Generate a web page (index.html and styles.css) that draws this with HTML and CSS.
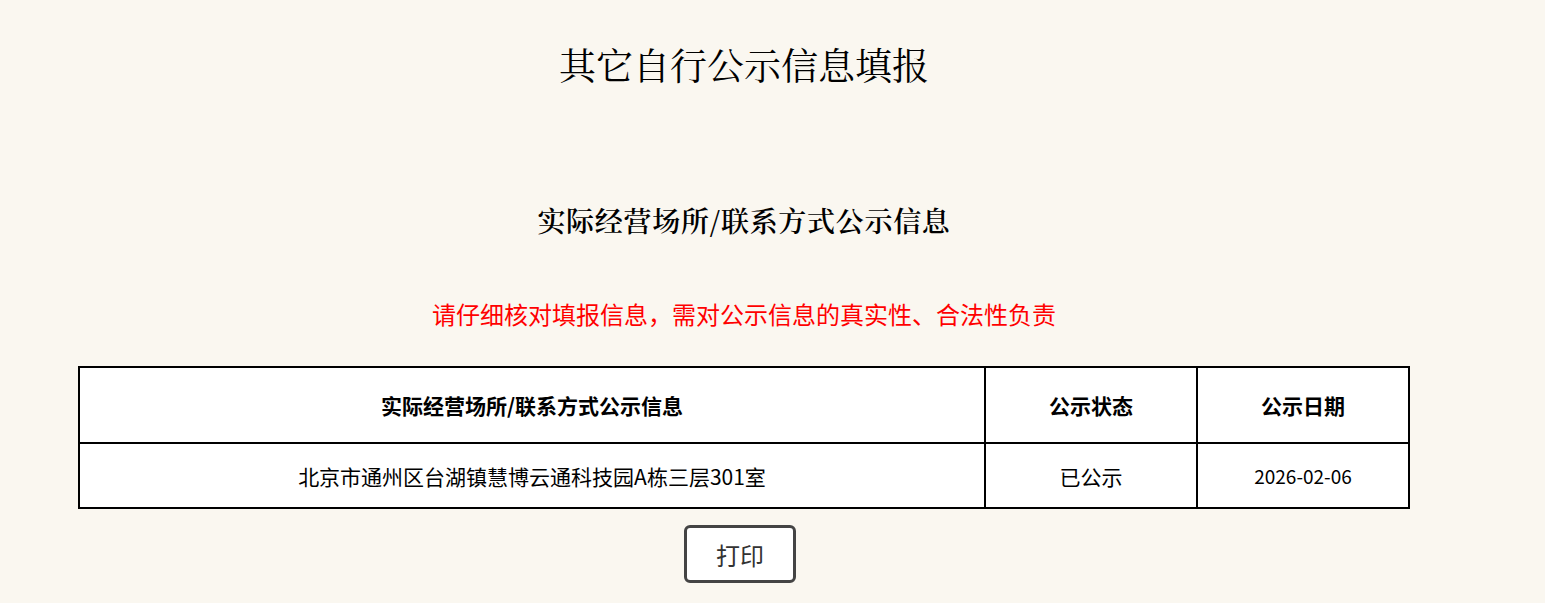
FILE: index.html
```html
<!DOCTYPE html>
<html lang="zh-CN">
<head>
<meta charset="utf-8">
<title>其它自行公示信息填报</title>
<link rel="stylesheet" href="styles.css">
</head>
<body>
<div class="page">
  <h1 class="title">其它自行公示信息填报</h1>
  <h2 class="subtitle">实际经营场所/联系方式公示信息</h2>
  <p class="notice">请仔细核对填报信息，需对公示信息的真实性、合法性负责</p>
  <table class="info">
    <colgroup>
      <col class="c1">
      <col class="c2">
      <col class="c3">
    </colgroup>
    <thead>
      <tr>
        <th>实际经营场所/联系方式公示信息</th>
        <th>公示状态</th>
        <th>公示日期</th>
      </tr>
    </thead>
    <tbody>
      <tr>
        <td>北京市通州区台湖镇慧博云通科技园A栋三层301室</td>
        <td>已公示</td>
        <td class="date">2026-02-06</td>
      </tr>
    </tbody>
  </table>
  <div class="actions">
    <button class="print">打印</button>
  </div>
</div>
</body>
</html>
```
FILE: styles.css
```css
html, body {
  margin: 0;
  padding: 0;
  background: #faf7f0;
}
.page {
  width: 1488px;
  display: flex;
  flex-direction: column;
  align-items: center;
  font-family: "Noto Sans CJK SC", "Microsoft YaHei", sans-serif;
  color: #000;
}
.title {
  margin: 40px 0 0;
  font-family: "Noto Serif CJK SC", "Liberation Serif", "Noto Sans CJK SC", serif;
  font-size: 37px;
  line-height: 48px;
  font-weight: normal;
}
.subtitle {
  margin: 114px 0 0;
  font-family: "Noto Serif CJK SC", "Liberation Serif", "Noto Sans CJK SC", serif;
  font-size: 28px;
  line-height: 36px;
  font-weight: 600;
  letter-spacing: 0.7px;
}
.notice {
  margin: 60px 0 0;
  color: #ff0000;
  font-size: 24px;
  line-height: 32px;
}
.info {
  margin-top: 36px;
  width: 1330px;
  border-collapse: collapse;
  table-layout: fixed;
  background: #fff;
}
.c1 { width: 906px; }
.c2 { width: 212px; }
.c3 { width: 212px; }
.info th, .info td {
  border: 2px solid #000;
  text-align: center;
  padding: 0;
  font-size: 21px;
}
.info th {
  height: 74px;
  font-weight: bold;
}
.info td {
  height: 63px;
}
.info td.date {
  font-size: 19px;
}
.actions {
  margin-top: 16px;
  padding-right: 8px;
  display: flex;
  justify-content: center;
}
.print {
  width: 112px;
  height: 58px;
  background: #fff;
  border: 3px solid #444;
  border-radius: 6px;
  font-family: "Noto Sans CJK SC", sans-serif;
  font-size: 24px;
  color: #333;
  padding: 0;
}
```
